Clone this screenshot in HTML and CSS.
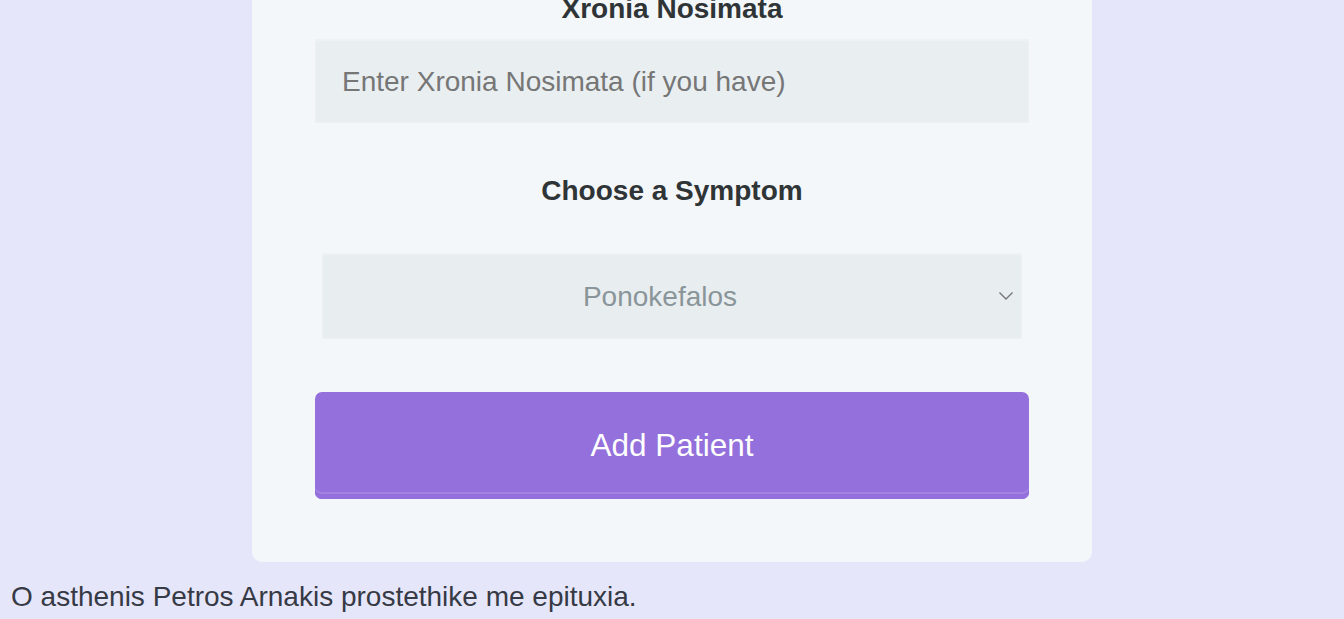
FILE: index.html
```html
<!DOCTYPE html>
<html lang="en">
<head>
<meta charset="utf-8">
<title>Add Patient</title>
<link rel="stylesheet" href="styles.css">
</head>
<body>
<form class="card">
  <label class="field-label" for="xronia">Xronia Nosimata</label>
  <input class="text-input" id="xronia" type="text" placeholder="Enter Xronia Nosimata (if you have)">
  <label class="field-label symptom-label" for="symptom">Choose a Symptom</label>
  <div class="select-wrap">
    <select class="select" id="symptom">
      <option>Ponokefalos</option>
    </select>
    <svg class="chevron" width="16" height="10" viewBox="0 0 16 10"><path d="M1.5 1.5 L8 8 L14.5 1.5" fill="none" stroke="#777" stroke-width="1.4"/></svg>
  </div>
  <button class="submit" type="button">Add Patient</button>
</form>
<div class="message">O asthenis Petros Arnakis prostethike me epituxia.</div>
</body>
</html>
```
FILE: styles.css
```css
html, body {
  margin: 0;
  padding: 0;
}
body {
  background: #e6e6fa;
  font-family: "Liberation Sans", Arial, sans-serif;
  font-size: 28px;
  color: #333;
  padding: 8px;
  overflow: hidden;
}
.card {
  width: 840px;
  box-sizing: border-box;
  margin: -15px auto 0;
  background: #f4f7f9;
  border-radius: 10px;
  padding: 0 63px 63px;
  display: flex;
  flex-direction: column;
  align-items: center;
}
.field-label {
  display: block;
  font-weight: bold;
  font-size: 28px;
  line-height: 32px;
  color: #2f3437;
  text-align: center;
}
.text-input {
  margin-top: 14px;
  width: 714px;
  height: 84px;
  box-sizing: border-box;
  border: 1px solid #edf1f3;
  border-top: 2px solid #eef2f4;
  background: #e9eef1;
  padding: 0 26px;
  font-family: inherit;
  font-size: 28px;
  color: #333;
  outline: none;
}
.text-input::placeholder {
  color: #767676;
}
.symptom-label {
  margin-top: 52px;
}
.select-wrap {
  position: relative;
  margin-top: 46px;
  width: 700px;
}
.select {
  display: block;
  width: 700px;
  height: 86px;
  box-sizing: border-box;
  appearance: none;
  -webkit-appearance: none;
  border: 1px solid #edf1f3;
  border-top: 2px solid #eef2f4;
  border-radius: 0;
  background: #e8edf0;
  font-family: inherit;
  font-size: 28px;
  color: #8a9599;
  text-align: center;
  text-align-last: center;
  padding: 0 50px 0 26px;
  outline: none;
}
.chevron {
  position: absolute;
  right: 8px;
  top: 38px;
  pointer-events: none;
}
.submit {
  margin-top: 53px;
  width: 714px;
  height: 107px;
  border: none;
  border-radius: 7px;
  background: #9370db;
  box-shadow: inset 0 -5px 0 #9370db, inset 0 -7px 0 #a283e4;
  color: #fff;
  font-family: inherit;
  font-size: 31.5px;
  cursor: pointer;
}
.message {
  margin-top: 19px;
  padding-left: 3px;
  line-height: 32px;
  color: #363a45;
}
```
